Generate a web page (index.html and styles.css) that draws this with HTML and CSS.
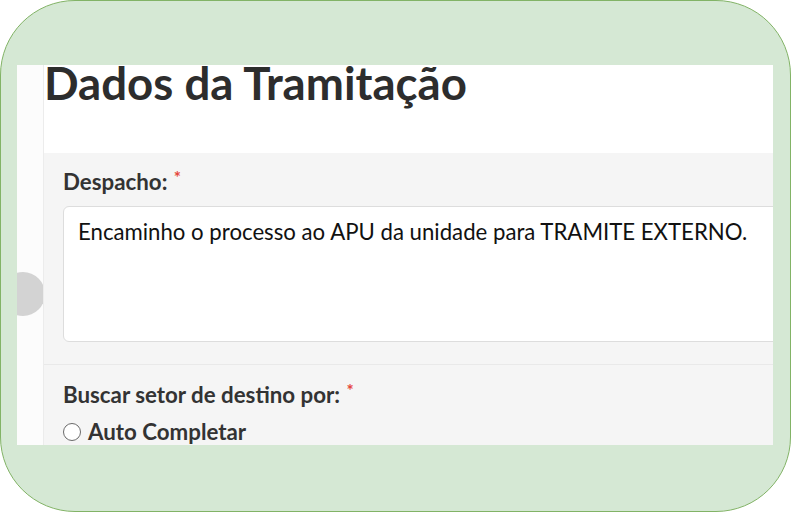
FILE: index.html
```html
<!DOCTYPE html>
<html lang="pt-BR">
<head>
  <meta charset="UTF-8">
  <title>Dados da Tramitação</title>
  <link rel="stylesheet" href="styles.css">
</head>
<body>
  <div class="frame">
    <div class="screen">
      <div class="rail">
        <div class="rail-knob"></div>
      </div>
      <div class="main">
        <h1 class="title">Dados da Tramitação</h1>
        <div class="panel">
          <div class="field field-sep">
            <label class="label">Despacho: <span class="req">*</span></label>
            <textarea class="input" readonly>Encaminho o processo ao APU da unidade para TRAMITE EXTERNO.</textarea>
          </div>
          <div class="field">
            <label class="label">Buscar setor de destino por: <span class="req">*</span></label>
            <div class="radio-row">
              <span class="radio"></span>
              <span class="radio-text">Auto Completar</span>
            </div>
          </div>
        </div>
      </div>
    </div>
  </div>
</body>
</html>
```

FILE: styles.css
```css
html, body { margin: 0; padding: 0; background: #fff; }
body { font-family: Lato, "Open Sans", sans-serif; color: #333; }

.frame { width: 791px; height: 512px; box-sizing: border-box; border: 1px solid #82b366; border-radius: 75px; background: #d5e8d4; padding: 64px 17px 66px 16px; }
.screen { display: flex; height: 100%; background: #fff; }
.rail { position: relative; overflow: hidden; width: 26px; flex: none; background: #fcfcfc; border-right: 1px solid #ececec; }
.rail-knob { position: absolute; left: -16px; top: 207px; width: 44px; height: 44px; border-radius: 50%; background: #d3d3d3; }
.main { flex: 1; min-width: 0; display: flex; flex-direction: column; }

.title { margin: 0 0 52px 0; font-size: 45.6px; line-height: 36px; font-weight: 700; color: #2d2d2d; }
.panel { flex: 1; background: #f5f5f5; overflow: hidden; }

.field { padding: 16px 0 0 19px; }
.field-sep { padding-bottom: 22px; border-bottom: 1px solid #e9e9e9; }
.field + .field { padding-top: 17px; }
.label { display: block; font-size: 22.3px; line-height: 26px; font-weight: 700; color: #333; }
.req { color: #e5463c; font-size: 17px; vertical-align: top; line-height: 18px; margin-left: 1px; }

.input { display: block; box-sizing: border-box; width: 760px; height: 136px; margin-top: 11px; padding: 12px 14px; border: 1px solid #ddd; border-radius: 6px; background: #fff; font-family: Lato, sans-serif; font-size: 22.2px; line-height: 26px; color: #111; resize: none; outline: none; }

.radio-row { display: flex; align-items: center; margin-top: 11px; height: 26px; }
.radio { width: 16px; height: 16px; border: 1.5px solid #6a6a6a; border-radius: 50%; background: #fff; margin-right: 7px; flex: none; }
.radio-text { font-size: 22.3px; line-height: 26px; font-weight: 700; color: #333; }
```
